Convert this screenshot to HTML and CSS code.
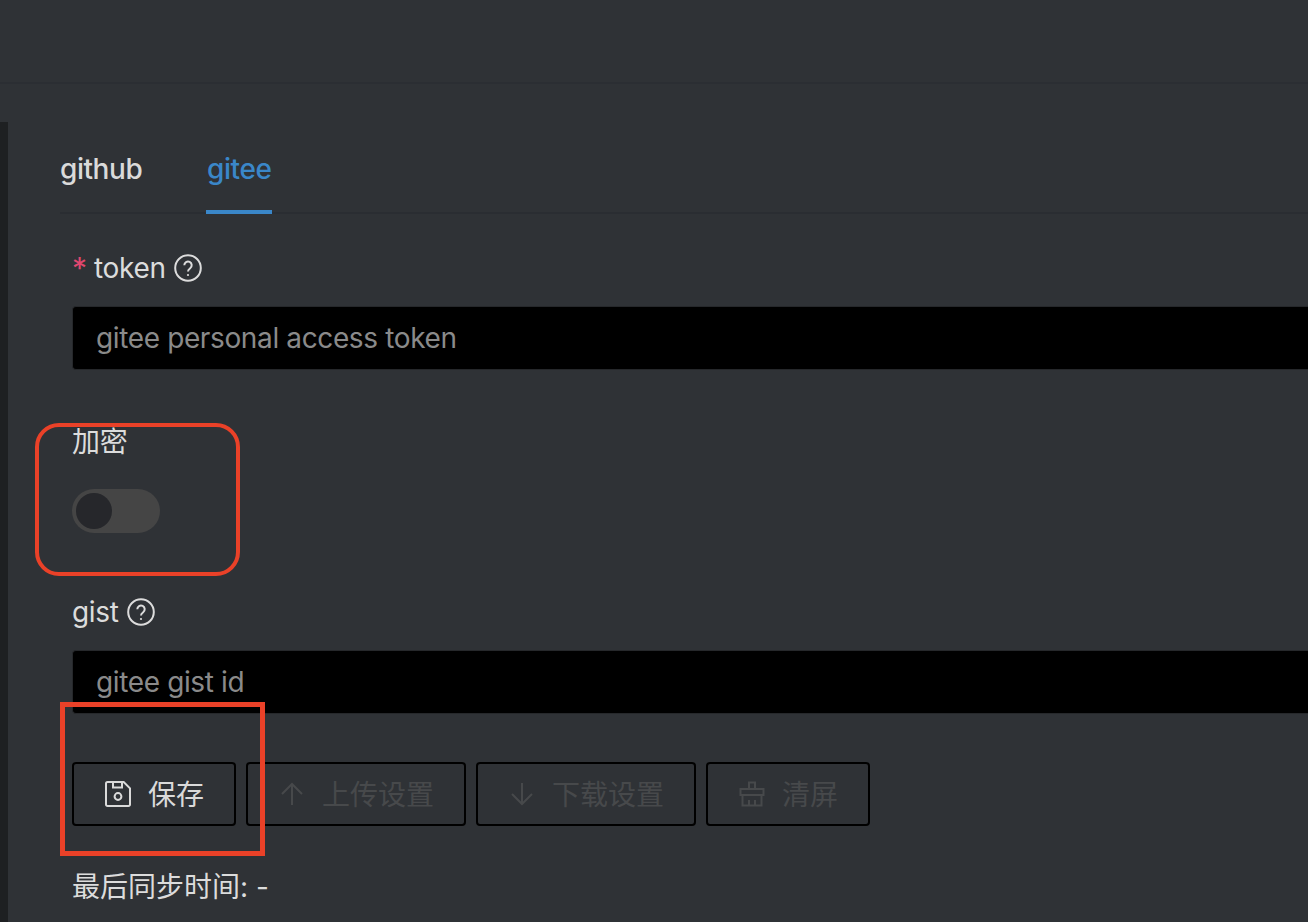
FILE: index.html
```html
<!DOCTYPE html>
<html lang="zh-CN">
<head>
    <meta charset="UTF-8">
    <title>设置</title>
    <link rel="stylesheet" href="styles.css">
</head>
<body>
    <div class="topbar"></div>
    <div class="main">
        <div class="side"></div>
        <div class="content">
            <div class="tabs">
                <div class="tab">github</div>
                <div class="tab on">gitee</div>
            </div>
            <form class="form">
                <div class="item item-token">
                    <label class="label"><span class="star">*</span> token
                        <svg class="help" viewBox="0 0 28 28"><circle cx="14" cy="14" r="12.8"/><path d="M10.3 11.2a3.7 3.7 0 1 1 5.9 3c-1.4 1-2.2 1.7-2.2 3.3"/><circle class="dot" cx="14" cy="21" r="1.1"/></svg>
                    </label>
                    <div class="input">gitee personal access token</div>
                </div>
                <div class="item item-encrypt">
                    <label class="label">加密</label>
                    <div class="switch"><span class="knob"></span></div>
                </div>
                <div class="item item-gist">
                    <label class="label">gist
                        <svg class="help" viewBox="0 0 28 28"><circle cx="14" cy="14" r="12.8"/><path d="M10.3 11.2a3.7 3.7 0 1 1 5.9 3c-1.4 1-2.2 1.7-2.2 3.3"/><circle class="dot" cx="14" cy="21" r="1.1"/></svg>
                    </label>
                    <div class="input">gitee gist id</div>
                </div>
                <div class="btns">
                    <button type="button" class="btn btn-save">
                        <svg class="ico" viewBox="0 0 26 26"><path d="M1 2.500A1.500 1.500 0 0 1 2.500 1h16.200L25 7.300v16.200a1.500 1.500 0 0 1-1.500 1.500h-21A1.500 1.500 0 0 1 1 23.500z"/><path d="M8 1v5.500h9V1"/><circle cx="13" cy="15.500" r="3.400"/></svg>
                        <span>保存</span>
                    </button>
                    <button type="button" class="btn btn-wide off">
                        <svg class="ico" viewBox="0 0 26 26"><path d="M13 24V3M3 13 13 3l10 10"/></svg>
                        <span>上传设置</span>
                    </button>
                    <button type="button" class="btn btn-wide off">
                        <svg class="ico" viewBox="0 0 26 26"><path d="M13 2v21M3 13l10 10 10-10"/></svg>
                        <span>下载设置</span>
                    </button>
                    <button type="button" class="btn btn-clear off">
                        <svg class="ico" viewBox="0 0 26 26"><path d="M10 8V1.500h6V8M1.500 8h23v6h-23zM3.500 14v10.500h19V14M10 19v5.500M16 19v5.500"/></svg>
                        <span>清屏</span>
                    </button>
                </div>
                <div class="sync">最后同步时间: -</div>
            </form>
        </div>
    </div>
    <div class="mark mark-round"></div>
    <div class="mark mark-square"></div>
</body>
</html>
```

FILE: styles.css
```css
*{
    margin:0;
    padding:0;
    box-sizing:border-box;
}
html,body{
    height:100%;
    overflow:hidden;
}
body{
    background-color:#2f3236;
    color:#dcdcdc;
    font-family:Inter,"Noto Sans CJK SC",sans-serif;
    font-size:28px;
}
.topbar{
    height:84px;
    border-bottom:2px solid #2b2e33;
}
.main{
    display:flex;
    padding-top:38px;
}
.side{
    width:8px;
    height:800px;
    background-color:#1e2022;
}
.content{
    flex:1;
    padding-left:52px;
    min-width:0;
}
.tabs{
    display:flex;
    gap:64px;
    height:92px;
    border-bottom:2px solid #2a2d32;
}
.tab{
    height:92px;
    padding-top:27px;
    line-height:40px;
    font-weight:500;
    letter-spacing:-.45px;
    color:#dadada;
}
.tab.on{
    min-width:66px;
    text-align:center;
    color:#3a87c9;
    border-bottom:4px solid #3a87c9;
}
.form{
    padding-left:12px;
}
.item-token{
    padding-top:32px;
}
.item-encrypt{
    padding-top:50px;
}
.item-gist{
    padding-top:57px;
}
.label{
    display:flex;
    align-items:center;
    height:44px;
    line-height:44px;
    gap:8px;
    letter-spacing:-.3px;
}
.star{
    width:14px;
    font-size:30px;
    line-height:44px;
    color:#e0476f;
}
.help{
    width:28px;
    height:28px;
    fill:none;
    stroke:#dcdcdc;
    stroke-width:2;
}
.help .dot{
    fill:#dcdcdc;
    stroke:none;
}
.input{
    height:64px;
    margin-top:16px;
    padding-left:23px;
    line-height:62px;
    letter-spacing:-.37px;
    background-color:#000;
    border:1px solid #26282b;
    border-right:0;
    border-radius:4px 0 0 4px;
    color:#8a8a8a;
}
.switch{
    width:88px;
    height:44px;
    margin-top:25px;
    padding:4px;
    border-radius:22px;
    background-color:#454545;
}
.knob{
    display:block;
    width:36px;
    height:36px;
    border-radius:50%;
    background-color:#26272b;
}
.btns{
    display:flex;
    gap:10px;
    margin-top:48px;
}
.btn{
    display:flex;
    align-items:center;
    justify-content:center;
    gap:17px;
    height:64px;
    background:none;
    border:2px solid #000;
    border-radius:4px;
    color:#dadada;
    font:inherit;
}
.btn span{
    margin-bottom:2px;
}
.btn-save,.btn-clear{
    width:164px;
}
.btn-wide{
    width:220px;
}
.btn.off{
    color:#47494b;
}
.ico{
    width:26px;
    height:26px;
    margin-left:1px;
    fill:none;
    stroke:currentColor;
    stroke-width:2;
}
.sync{
    margin-top:39px;
    line-height:44px;
}
.mark{
    position:absolute;
    border:4px solid #ea4128;
}
.mark-round{
    left:35px;
    top:423px;
    width:205px;
    height:153px;
    border-radius:24px;
}
.mark-square{
    left:60px;
    top:702px;
    width:205px;
    height:154px;
    border-width:5px;
}
```
